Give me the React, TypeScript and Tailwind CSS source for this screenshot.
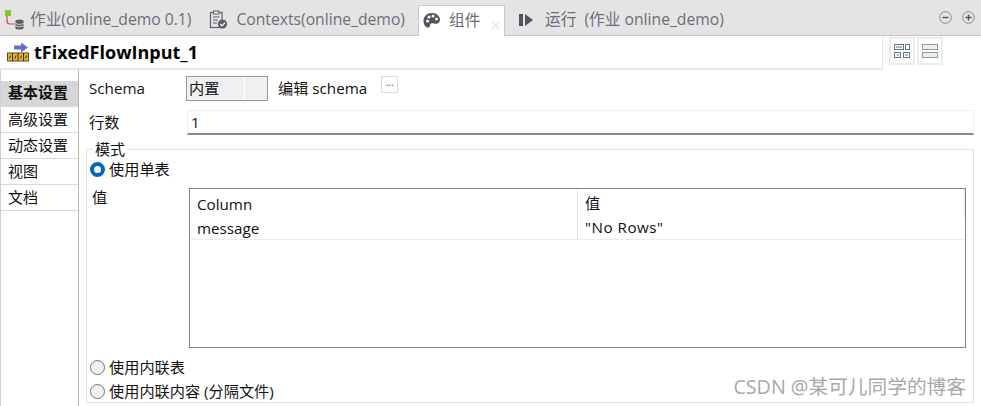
const font = "[font-family:'Open_Sans','Noto_Sans_CJK_SC',sans-serif]";

function JobIcon() {
  return (
    <svg width="20" height="20" viewBox="0 0 20 20" className="shrink-0">
      <rect x="0" y="0" width="6" height="6" fill="#8fc31f" />
      <path d="M2 6 V11 Q2 14 5 14 H10" fill="none" stroke="#c8503c" strokeWidth="1.2" />
      <ellipse cx="14.5" cy="11" rx="4" ry="1.6" fill="#5b5f66" />
      <rect x="10.5" y="11" width="8" height="7" fill="#5b5f66" />
      <ellipse cx="14.5" cy="18" rx="4" ry="1.6" fill="#5b5f66" />
      <path d="M10.5 13.5 Q14.5 15.5 18.5 13.5 M10.5 16 Q14.5 18 18.5 16" fill="none" stroke="#e4e4e4" strokeWidth="0.8" />
    </svg>
  );
}

function ContextsIcon() {
  return (
    <svg width="20" height="20" viewBox="0 0 20 20" className="shrink-0">
      <rect x="1.5" y="2.5" width="11.5" height="15" fill="none" stroke="#5b5f66" strokeWidth="1.2" />
      <rect x="4.5" y="1" width="5.5" height="3" fill="#e4e4e4" stroke="#5b5f66" strokeWidth="1" />
      <path d="M4 7 H10.5 M4 10 H9 M4 13 H8" stroke="#5b5f66" strokeWidth="1.1" />
      <circle cx="13.5" cy="14" r="4.6" fill="#5b5f66" />
      <path d="M11.2 14 L13 15.8 L16 12.6" fill="none" stroke="#fff" strokeWidth="1.2" />
    </svg>
  );
}

function PaletteIcon() {
  return (
    <svg width="18" height="18" viewBox="0 0 18 18" className="shrink-0">
      <path d="M9 1 C4 1 0.5 4.5 0.5 9 C0.5 13 3 16 5.5 15.5 C7.5 15 6.5 12.5 8 11.5 C9.5 10.5 12 12.5 14.5 11.5 C17 10.5 17.5 8 16.5 5.5 C15.5 2.8 12.5 1 9 1 Z" fill="#50545c" />
      <circle cx="4.5" cy="9" r="1.5" fill="#fff" />
      <circle cx="6" cy="5" r="1.5" fill="#fff" />
      <circle cx="10" cy="4" r="1.5" fill="#fff" />
      <circle cx="13.5" cy="7" r="1.5" fill="#fff" />
    </svg>
  );
}

function RunIcon() {
  return (
    <svg width="14" height="12" viewBox="0 0 14 12" className="shrink-0">
      <rect x="0" y="0" width="4" height="12" fill="#50545c" />
      <path d="M6 0 L14 6 L6 12 Z" fill="#50545c" />
    </svg>
  );
}

function ComponentIcon() {
  return (
    <svg width="22" height="20" viewBox="0 0 22 20" className="shrink-0">
      <path d="M7 3.5 H14 V0.5 L21 5.5 L14 10.5 V7.5 H7 Z" fill="#6a6fc4" />
      <rect x="0.5" y="11" width="21" height="8" fill="#f0b429" stroke="#5a4a1a" strokeWidth="1" />
      <path d="M5.5 11 V19 M11 11 V19 M16.5 11 V19" stroke="#2d2a20" strokeWidth="1" />
      <path d="M2.5 16.5 L3.5 13.5 M8 16.5 L9 13.5 M13.5 16.5 L14.5 13.5 M18.5 16.5 L19.5 13.5" stroke="#2d2a20" strokeWidth="1" />
    </svg>
  );
}

function Tab({ icon, label, gap }: { icon: React.ReactNode; label: string; gap: string }) {
  return (
    <div className={`flex h-[30px] items-center ${gap} text-[15.7px] text-[#6b6f78]`}>
      {icon}
      <span className="whitespace-pre">{label}</span>
    </div>
  );
}

function Radio({ on }: { on?: boolean }) {
  return on ? (
    <span className="h-[15px] w-[15px] shrink-0 rounded-full border-[4px] border-[#0067c0] bg-white" />
  ) : (
    <span className="h-[15px] w-[15px] shrink-0 rounded-full border border-[#767676] bg-[#f1f1f1]" />
  );
}

function RadioRow({ on, label, className }: { on?: boolean; label: string; className?: string }) {
  return (
    <div className={`flex h-[20px] items-center gap-[4px] pl-[3px] text-[15.2px] text-[#111] ${className ?? ""}`}>
      <Radio on={on} />
      <span>{label}</span>
    </div>
  );
}

const sideItems = ["基本设置", "高级设置", "动态设置", "视图", "文档"];

export default function App() {
  return (
    <div className={`flex h-[406px] w-[981px] flex-col overflow-hidden bg-white ${font}`}>
      {/* tab strip */}
      <div className="flex h-[36px] shrink-0 items-end justify-between border-b border-[#c8c8c8] bg-[#e4e4e4]">
        <div className="flex h-[31px] items-end">
          <div className="flex h-[30px] items-center pl-[5px]">
            <Tab icon={<JobIcon />} label="作业(online_demo 0.1)" gap="gap-[5px]" />
          </div>
          <div className="ml-[18px]">
            <Tab icon={<ContextsIcon />} label="Contexts(online_demo)" gap="gap-[7px]" />
          </div>
          <div className="relative top-px ml-[13px] flex h-[31px] w-[87px] items-center gap-[8px] rounded-t-[2px] border border-b-0 border-[#c8c8c8] bg-white pl-[4px] text-[15.7px] text-[#6b6f78]">
            <PaletteIcon />
            <span>组件</span>
            <svg width="9" height="9" viewBox="0 0 9 9" className="absolute left-[72px] top-[15px]">
              <path d="M0.5 0.5 L8.5 8.5 M8.5 0.5 L0.5 8.5" stroke="#d4d4d4" strokeWidth="1" />
            </svg>
          </div>
          <div className="ml-[14px]">
            <Tab icon={<RunIcon />} label="运行  (作业 online_demo)" gap="gap-[12px]" />
          </div>
        </div>
        <div className="mb-[11px] mr-[6px] flex gap-[10px]">
          <svg width="13" height="13" viewBox="0 0 13 13">
            <circle cx="6.5" cy="6.5" r="5.8" fill="none" stroke="#8a8a8a" />
            <path d="M3.5 6.5 H9.5" stroke="#555" strokeWidth="1.4" />
          </svg>
          <svg width="13" height="13" viewBox="0 0 13 13">
            <circle cx="6.5" cy="6.5" r="5.8" fill="none" stroke="#8a8a8a" />
            <path d="M3.5 6.5 H9.5 M6.5 3.5 V9.5" stroke="#555" strokeWidth="1.4" />
          </svg>
        </div>
      </div>

      {/* component title */}
      <div className="flex h-[34px] shrink-0">
        <div className="flex h-[34px] w-[883px] items-center gap-[5px] border-r border-b-2 border-[#e1e9f2] pl-[7px]">
          <ComponentIcon />
          <span className="text-[18px] leading-none font-bold text-black">tFixedFlowInput_1</span>
        </div>
        <div className="ml-[6px] mt-px flex gap-[2px]">
          <div className="flex h-[28px] w-[26px] items-center justify-center border-2 border-[#ececec] bg-white">
            <svg width="16" height="14" viewBox="0 0 16 14">
              <g fill="none" stroke="#63758a">
                <rect x="0.5" y="0.5" width="9" height="5" />
                <rect x="11.5" y="0.5" width="4" height="5" />
                <rect x="0.5" y="8.5" width="6" height="5" />
                <rect x="9.5" y="8.5" width="6" height="5" />
              </g>
              <path d="M2 3 H8 M2.5 11 H5 M11 11 H14" stroke="#63758a" />
            </svg>
          </div>
          <div className="flex h-[28px] w-[26px] items-center justify-center border-2 border-[#ececec] bg-white">
            <svg width="16" height="14" viewBox="0 0 16 14">
              <rect x="0.5" y="0.5" width="15" height="5" fill="#f3efdc" stroke="#7f9cbc" />
              <rect x="0.5" y="8.5" width="15" height="5" fill="#f3efdc" stroke="#7f9cbc" />
            </svg>
          </div>
        </div>
      </div>

      <div className="flex min-h-0 flex-1">
        {/* side tabs */}
        <div className="flex w-[79px] shrink-0 flex-col border-x border-l-[#d0d0d0] border-r-[#b8b8b8] pt-[11px] text-[15px] text-[#111]">
          {sideItems.map((item, i) => (
            <div
              key={item}
              className={`flex h-[26px] items-center border-b border-[#d8d8d8] pl-[7px] ${i === 0 ? "bg-[#d6d6d6] pb-[2px] font-bold" : ""}`}
            >
              {item}
            </div>
          ))}
        </div>

        {/* settings form */}
        <div className="min-w-0 flex-1 pl-[7px] pr-[7px] text-[15.2px] text-[#111]">
          <div className="mt-[6px] flex h-[25px] items-center">
            <span className="w-[100px] pl-[3px]">Schema</span>
            <div className="flex h-[25px] w-[82px] border border-[#9a9a9a] bg-[#f0f0f0]">
              <span className="w-[58px] border-r border-white pl-[2px] leading-[23px]">内置</span>
            </div>
            <span className="ml-[10px]">编辑 schema</span>
            <div className="relative top-[-4px] ml-[14px] flex h-[17px] w-[17px] items-start justify-center border border-[#dcdcdc] bg-white text-[10px] leading-[10px] text-[#444]">
              ...
            </div>
          </div>

          <div className="mt-[9px] flex h-[25px] items-center">
            <span className="w-[101px] pl-[3px]">行数</span>
            <div className="flex h-[25px] flex-1 items-center rounded-t-[2px] border border-b-2 border-[#ececec] border-b-[#8a8a8a] pl-[3px]">1</div>
          </div>

          <div className="relative mt-[14px] h-[254px] border border-[#e0e0e0]">
            <span className="absolute top-[-9px] left-[6px] bg-white px-[2px] text-[15px] leading-[16px]">模式</span>
            <RadioRow on label="使用单表" className="mt-[9px]" />
            <div className="mt-[9px] flex">
              <span className="w-[102px] pl-[5px] leading-[18px]">值</span>
              <div className="h-[160px] w-[777px] border border-[#7d8288]">
                <div className="flex h-[29px] items-center">
                  <span className="w-[388px] border-r border-[#e4e4e4] pl-[7px] leading-[28px]">Column</span>
                  <span className="h-full flex-1 border-r border-[#e4e4e4] pl-[7px] leading-[28px]">值</span>
                </div>
                <div className="flex h-[22px] items-center border-b border-[#ececec]">
                  <span className="h-full w-[388px] border-r border-[#e4e4e4] pl-[7px] leading-[20px]">message</span>
                  <span className="flex-1 pb-[2px] pl-[7px] tracking-[0.5px]">"No Rows"</span>
                </div>
              </div>
            </div>
            <RadioRow label="使用内联表" className="mt-[9px]" />
            <RadioRow label="使用内联内容 (分隔文件)" className="mt-[4px]" />
            <span className="absolute right-[7px] bottom-[3px] text-[19.7px] leading-[24px] text-[#a8a8a8]">CSDN @某可儿同学的博客</span>
          </div>
        </div>
      </div>
    </div>
  );
}
